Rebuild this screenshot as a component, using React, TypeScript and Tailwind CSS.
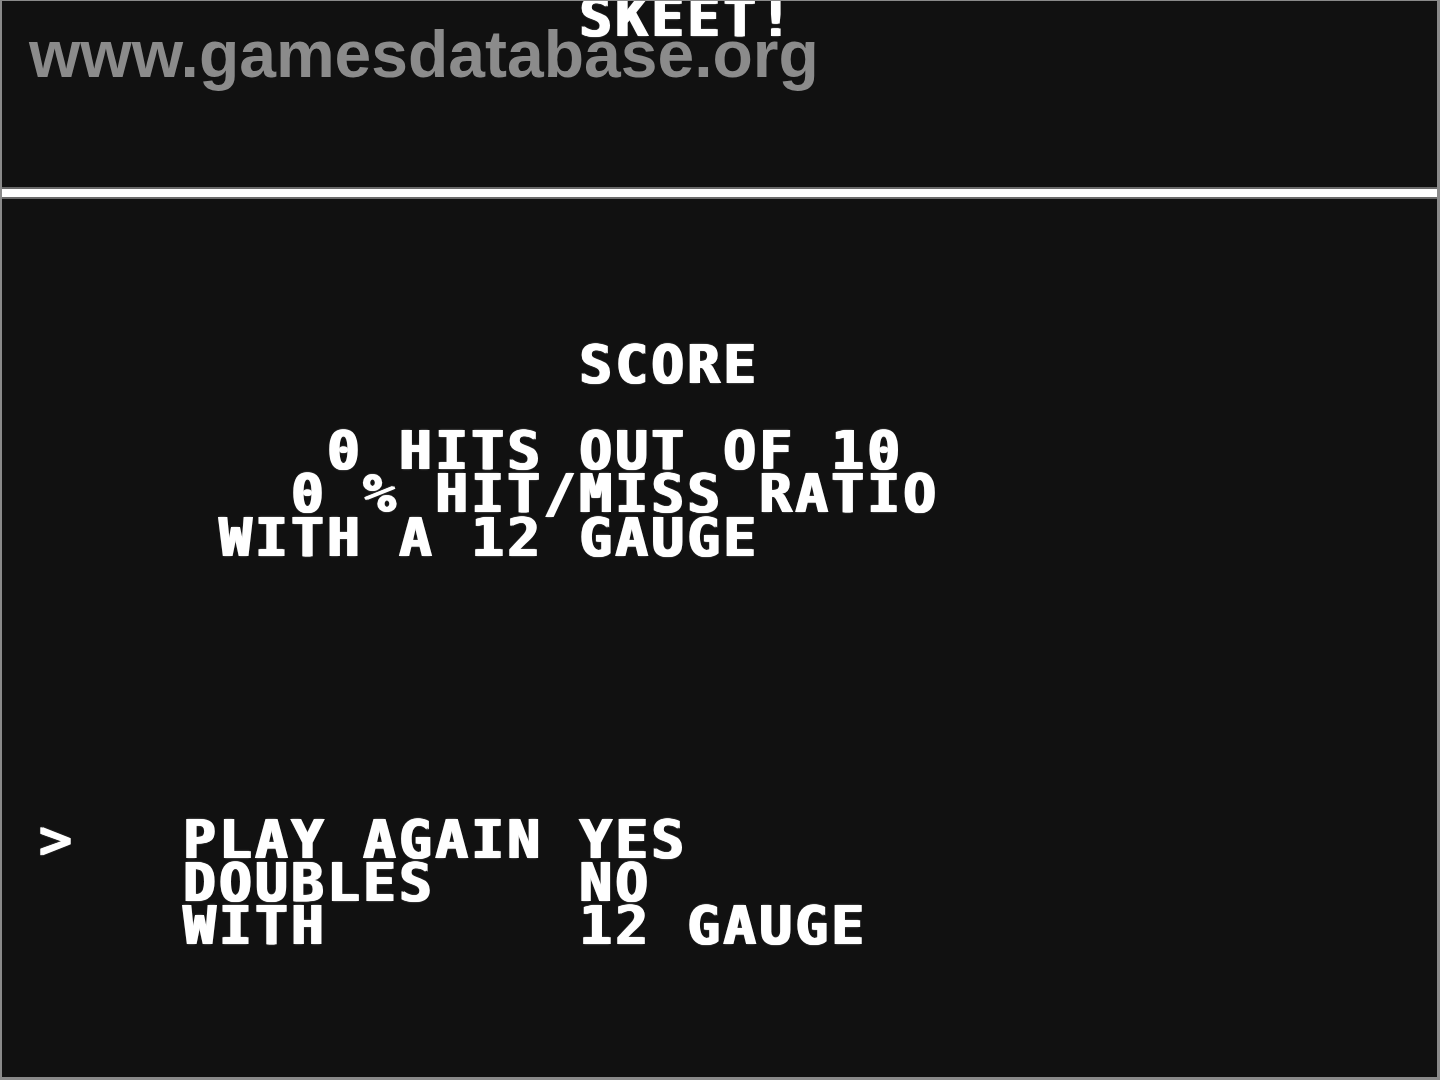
const topRows = ['                SKEET!'];

// rows 8..21 of the 40x25 text screen
const bottomRows = [
  '                SCORE',
  '',
  '         0 HITS OUT OF 10',
  '        0 % HIT/MISS RATIO',
  '      WITH A 12 GAUGE',
  '',
  '',
  '',
  '',
  '',
  '',
  ' >   PLAY AGAIN YES',
  '     DOUBLES    NO',
  '     WITH       12 GAUGE',
];

function ScreenRow({ text }: { text: string }) {
  return (
    <div className="h-[43.2px] whitespace-pre pl-[1px] font-['DejaVu_Sans_Mono',monospace] text-[54px] font-bold leading-[43.2px] tracking-[3.5px] text-white [text-shadow:1.5px_0_0_#fff,-1px_0_0_#fff,0_0_2px_rgba(255,255,255,0.6)]">
      {text}
    </div>
  );
}

export default function App() {
  return (
    <div className="relative flex h-[1080px] w-[1440px] flex-col overflow-hidden border-t border-r-[3px] border-b-[3px] border-l-2 border-[#8a8a8a] bg-[#111111]">
      {/* title strip */}
      <div className="h-[186px] shrink-0 overflow-hidden">
        <div className="-mt-[5px]">
          {topRows.map((r, i) => (
            <ScreenRow key={i} text={r} />
          ))}
        </div>
      </div>

      {/* divider */}
      <div className="h-[12px] shrink-0 border-y-2 border-[#6a6a6a] bg-white" />

      {/* score + menu */}
      <div className="flex-1 pt-[143.9px]">
        {bottomRows.map((r, i) => (
          <ScreenRow key={i} text={r} />
        ))}
      </div>

      {/* watermark */}
      <div className="absolute left-[27px] top-[20px] font-['Liberation_Sans',Arial,sans-serif] text-[66px] font-bold leading-[66px] text-[#8b8b8b]">
        www.gamesdatabase.org
      </div>
    </div>
  );
}
